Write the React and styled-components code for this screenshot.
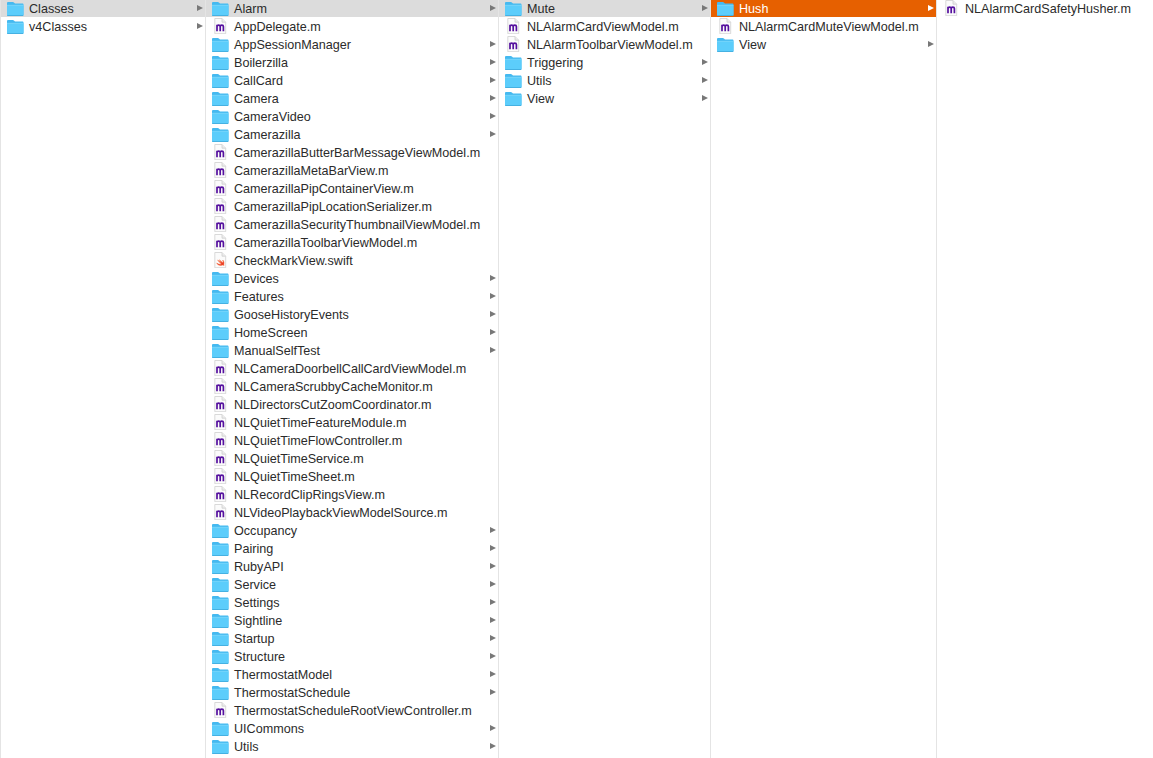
import styled, { createGlobalStyle } from "styled-components"

const GlobalStyle = createGlobalStyle`
  html, body {
    margin: 0;
    height: 100%;
    overflow: hidden;
    background: #ffffff;
  }
`

const Browser = styled.div`
  display: flex;
  height: 758px;
  width: 1153px;
  overflow: hidden;
  font-family: "Liberation Sans", Arial, sans-serif;
  font-size: 12.6px;
  color: #2b2b2b;
`

const Column = styled.div`
  display: flex;
  flex-direction: column;
  flex: none;
  width: ${({ $width }) => $width}px;
  box-sizing: border-box;
  border-left: 1px solid #e4e4e4;
  overflow: hidden;
`

const Row = styled.div`
  display: flex;
  align-items: center;
  flex: none;
  box-sizing: border-box;
  height: 17px;
  margin-bottom: 1px;
  padding: 0 2px 1px 6px;
  gap: 5px;
  background: ${({ $state }) =>
    $state === "active" ? "#e66000" : $state === "open" ? "#dcdcdc" : "transparent"};
  color: ${({ $state }) => ($state === "active" ? "#ffffff" : "inherit")};
`

const Name = styled.span`
  flex: 1;
  min-width: 0;
  margin-top: 2px;
  white-space: nowrap;
`

const IconBox = styled.svg`
  display: block;
  flex: none;
  width: 17px;
  height: 16px;
`

const FolderIcon = () => (
  <IconBox viewBox="0 0 17 16">
    <path d="M0 3.200C0 2.500 .5 2 1.200 2h4.600c.5 0 .8.2 1.100.5L8 3.600h7.300c.7 0 1.200.4 1.200 1v10.200c0 .7-.5 1.200-1.200 1.200H1.200C.5 16 0 15.500 0 14.800z" fill="#45b9f0" />
    <path d="M0 5.200h16.500v9.600c0 .7-.5 1.200-1.200 1.200H1.200C.5 16 0 15.500 0 14.800z" fill="#5ccdfb" />
    <path d="M0 5.300h16.500" stroke="#8ee0fd" strokeWidth="0.6" />
    <path d="M.3 15.500h15.900" stroke="#3fa9dc" strokeWidth="0.8" />
  </IconBox>
)

const FileSheet = () => (
  <>
    <path d="M2.800 .5h7.200l3.700 3.700v11.500h-10.900z" fill="#fbfbfb" stroke="#cfcfcf" strokeWidth="0.8" />
    <path d="M10 .5v3.700h3.700" fill="#ececec" stroke="#cfcfcf" strokeWidth="0.8" />
  </>
)

const SourceIcon = () => (
  <IconBox viewBox="0 0 17 16">
    <FileSheet />
    <path d="M5 13.200V6.800M5 8.500c0-1.900 3.200-1.900 3.200 0v4.700M8.200 8.500c0-1.900 3.200-1.900 3.200 0v4.700" fill="none" stroke="#55109e" strokeWidth="1.700" />
  </IconBox>
)

const SwiftIcon = () => (
  <IconBox viewBox="0 0 17 16">
    <FileSheet />
    <path d="M4.700 11c1.500 1.200 3.400 1.600 4.700 1-1-.9-2.800-2.600-3.800-4 1.200 1.100 2.700 2.200 3.700 2.800-.8-1-1.400-2-1.900-3 1.400 1.400 2.800 2.600 3.600 2.700.3-.8.100-1.700-.3-2.500 1.200 1.200 1.700 2.900 1.100 4.200.3.600.3 1.100.2 1.400-.4-.6-1-.7-1.400-.5-1.800.9-4.700.4-5.900-2.100z" fill="#ea3a25" stroke="#f4683a" strokeWidth="0.5" />
  </IconBox>
)

const Arrow = styled.i`
  flex: none;
  width: 0;
  height: 0;
  border-style: solid;
  border-width: 3.500px 0 3.500px 6px;
  border-color: transparent transparent transparent ${({ $active }) => ($active ? "#ffffff" : "#787878")};
`

const icons = { d: FolderIcon, m: SourceIcon, s: SwiftIcon }

const columns = [
  { width: 205, items: [["d", "Classes", "open"], ["d", "v4Classes"]] },
  {
    width: 293,
    items: [
      ["d", "Alarm", "open"],
      ["m", "AppDelegate.m"],
      ["d", "AppSessionManager"],
      ["d", "Boilerzilla"],
      ["d", "CallCard"],
      ["d", "Camera"],
      ["d", "CameraVideo"],
      ["d", "Camerazilla"],
      ["m", "CamerazillaButterBarMessageViewModel.m"],
      ["m", "CamerazillaMetaBarView.m"],
      ["m", "CamerazillaPipContainerView.m"],
      ["m", "CamerazillaPipLocationSerializer.m"],
      ["m", "CamerazillaSecurityThumbnailViewModel.m"],
      ["m", "CamerazillaToolbarViewModel.m"],
      ["s", "CheckMarkView.swift"],
      ["d", "Devices"],
      ["d", "Features"],
      ["d", "GooseHistoryEvents"],
      ["d", "HomeScreen"],
      ["d", "ManualSelfTest"],
      ["m", "NLCameraDoorbellCallCardViewModel.m"],
      ["m", "NLCameraScrubbyCacheMonitor.m"],
      ["m", "NLDirectorsCutZoomCoordinator.m"],
      ["m", "NLQuietTimeFeatureModule.m"],
      ["m", "NLQuietTimeFlowController.m"],
      ["m", "NLQuietTimeService.m"],
      ["m", "NLQuietTimeSheet.m"],
      ["m", "NLRecordClipRingsView.m"],
      ["m", "NLVideoPlaybackViewModelSource.m"],
      ["d", "Occupancy"],
      ["d", "Pairing"],
      ["d", "RubyAPI"],
      ["d", "Service"],
      ["d", "Settings"],
      ["d", "Sightline"],
      ["d", "Startup"],
      ["d", "Structure"],
      ["d", "ThermostatModel"],
      ["d", "ThermostatSchedule"],
      ["m", "ThermostatScheduleRootViewController.m"],
      ["d", "UICommons"],
      ["d", "Utils"],
    ],
  },
  {
    width: 212,
    items: [
      ["d", "Mute", "open"],
      ["m", "NLAlarmCardViewModel.m"],
      ["m", "NLAlarmToolbarViewModel.m"],
      ["d", "Triggering"],
      ["d", "Utils"],
      ["d", "View"],
    ],
  },
  {
    width: 226,
    items: [
      ["d", "Hush", "active"],
      ["m", "NLAlarmCardMuteViewModel.m"],
      ["d", "View"],
    ],
  },
  { width: 217, items: [["m", "NLAlarmCardSafetyHusher.m"]] },
]

export default function App() {
  return (
    <>
      <GlobalStyle />
      <Browser>
        {columns.map((column) => (
          <Column key={column.width} $width={column.width}>
            {column.items.map(([kind, name, state]) => {
              const Icon = icons[kind]
              return (
                <Row key={name} $state={state}>
                  <Icon />
                  <Name>{name}</Name>
                  {kind === "d" && <Arrow $active={state === "active"} />}
                </Row>
              )
            })}
          </Column>
        ))}
      </Browser>
    </>
  )
}
